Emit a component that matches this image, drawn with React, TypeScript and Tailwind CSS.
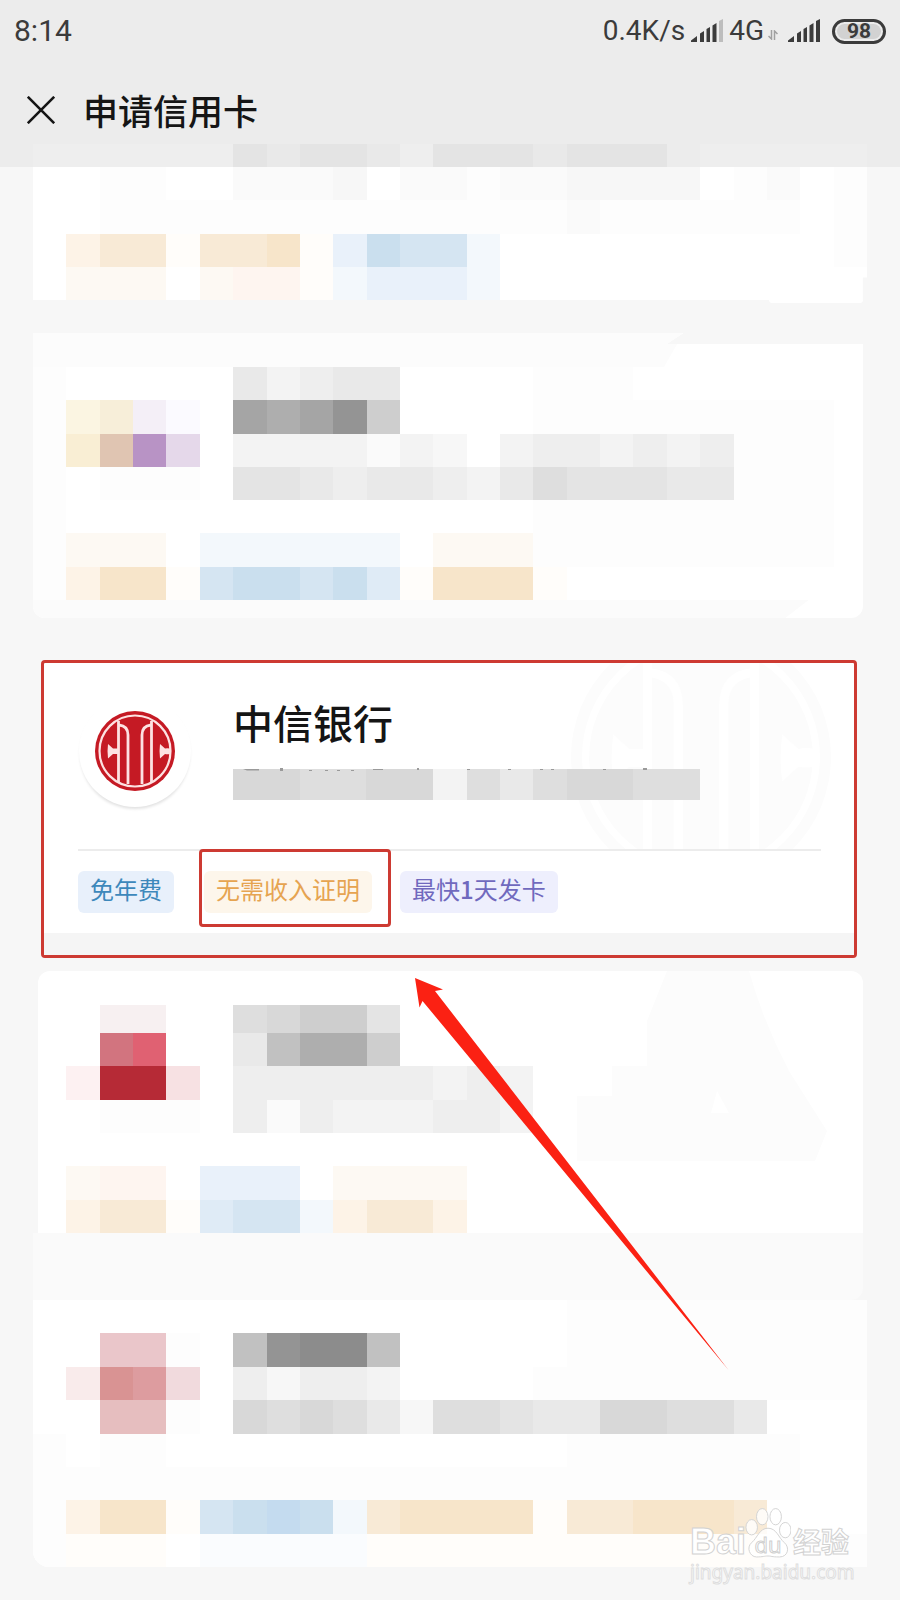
import React from "react";

const TONES: Record<string, string> = {
  ".": "",
  a: "bg-[#fdfdfd]",
  b: "bg-[#fafafa]",
  c: "bg-[#f7f7f7]",
  d: "bg-[#f3f3f3]",
  e: "bg-[#eeeeee]",
  f: "bg-[#e9e9e9]",
  g: "bg-[#e4e4e4]",
  h: "bg-[#dedede]",
  i: "bg-[#d8d8d8]",
  j: "bg-[#cecece]",
  k: "bg-[#c1c1c1]",
  l: "bg-[#aeaeae]",
  m: "bg-[#a5a5a5]",
  n: "bg-[#949494]",
  o: "bg-[#8c8c8c]",
  y: "bg-[#fffdfa]",
  z: "bg-[#fafcfe]",
  p: "bg-[#fef5f0]",
  "1": "bg-[#fdf9f3]",
  "2": "bg-[#fdf3e7]",
  "3": "bg-[#f8ead6]",
  "4": "bg-[#f7e5ca]",
  "5": "bg-[#f3f8fc]",
  "6": "bg-[#e9f1fa]",
  "7": "bg-[#d5e5f2]",
  "8": "bg-[#cadfee]",
  "9": "bg-[#dfebf6]",
  A: "bg-[#fbf5e2]",
  B: "bg-[#f7eed9]",
  C: "bg-[#f4eff7]",
  D: "bg-[#fbfaff]",
  E: "bg-[#f9eed4]",
  F: "bg-[#e0c5b2]",
  G: "bg-[#b893c5]",
  H: "bg-[#e5d8ea]",
  P: "bg-[#f7f0f1]",
  R: "bg-[#d2747f]",
  S: "bg-[#e06172]",
  T: "bg-[#b62a36]",
  U: "bg-[#fdf1f2]",
  V: "bg-[#f7e1e3]",
  W: "bg-[#eac6ca]",
  X: "bg-[#f9ebeb]",
  Y: "bg-[#d99393]",
  Z: "bg-[#dd9c9f]",
  J: "bg-[#f1dadd]",
  K: "bg-[#e6bebf]",
  L: "bg-[#c4dbef]",
};

function Mosaic({ rows, className }: { rows: string[]; className: string }) {
  return (
    <div aria-hidden="true" className={`flex flex-col ${className}`}>
      {rows.map((row, r) => (
        <div key={r} className="flex flex-1">
          {row.split("").map((tone, i) => (
            <div key={i} className={`flex-1 ${TONES[tone]}`} />
          ))}
        </div>
      ))}
    </div>
  );
}

function Signal({ weak = false }: { weak?: boolean }) {
  return (
    <svg width="32" height="24" viewBox="0 0 32 24" fill="#3b3b3b" aria-hidden="true">
      <path d="M0 23v-1.500l6-4.500v6z" />
      <path d="M9 23v-8.500l4-2.500v11z" />
      <path d="M15.500 23v-13l3.500-2v15z" />
      <path d="M21.500 23v-16.500l4-2.500v19z" />
      <path d="M28 23v-21l4-2v23z" fill={weak ? "#bdbdbd" : "#3b3b3b"} />
    </svg>
  );
}

function BankEmblem({ size, ink, line }: { size: string; ink: string; line: string }) {
  return (
    <svg viewBox="0 0 80 80" className={size} aria-hidden="true">
      <circle cx="40" cy="40" r="40" fill={ink} />
      <circle cx="40" cy="40" r="35.500" fill="none" stroke={line} strokeWidth="2.200" />
      <g fill="none" stroke={line} strokeWidth="2.800">
        <path d="M23.500 10v61" />
        <path d="M56.500 10v61" />
        <path d="M24 14q9 1 9 10v49" />
        <path d="M56 14q-9 1-9 10v49" />
      </g>
      <path d="M13 33l5 4.500h5v5.500h-5l-5 4.500q-1-7 0-14.500z" fill={line} />
      <path d="M65 33l5 4.500q2-.5 5 0v5.500q-3 .5-5 0l-5 4.500q-1-7 0-14.500z" fill={line} />
    </svg>
  );
}

const CARD_ONE = [
  "..aa..bbbc.bbabbcccc.ab.a",
  "..aaaaaaaaaaaaaabaaaaaa.a",
  ".233y334y68775..........a",
  ".111.1ppy56665...........",
];

const CARD_TWO = [
  "a.....fdeff....aaa.......",
  "aABCD.mlmnj....aaaaaaaaa.",
  "aEFGH.ddddbdc.deededeaaa.",
  "a.aaa.ggfeffedfhgggffaaa.",
  "a..............aaaaaaaaa.",
  "a111.555555.111aaaaaaaaa.",
  "a244y788789y444y.........",
];

const CARD_THREE = [
  "..RS..fkllj..............",
  ".UTTV.eeeeeeded..........",
  "..aaa.ebedddeed..........",
  ".........................",
  ".1pp.666.1111............",
  ".233y97752332............",
];

const CARD_FOUR = [
  "................aaaaaaaaa",
  "..WWa.knook.....aaaaaaaaa",
  ".XYZJ.eceed....aaaaaaaaaa",
  "..KKa.ihihfchhgffiihhf...",
  "a.aa............aaaaaaa..",
  "aaaaaaaaaaaaaaaaaaaaaaa..",
  "a244y78L8534444y334443...",
  "ayyy.zzzzzyyyyyyyyyyyyaaa",
];

export default function App() {
  return (
    <div className="relative min-h-screen overflow-hidden bg-[#f7f7f7] font-['Noto_Sans_CJK_SC','Noto_Sans',sans-serif]">
      <header className="bg-[#ececec]">
        <div className="flex h-[62px] items-center justify-between px-[14px] font-[Roboto,sans-serif] text-[#3b3b3b]">
          <span className="text-[30px] leading-8">8:14</span>
          <div className="flex items-center text-[28px] leading-8">
            <span className="mr-[6px]">0.4K/s</span>
            <Signal weak />
            <span className="ml-[6px]">4G</span>
            <svg width="10" height="10" viewBox="0 0 10 10" className="mt-2 mr-[10px] ml-1" fill="none" stroke="#a0a0a0" strokeWidth="1.500" aria-hidden="true">
              <path d="M3.500 0v9L.5 6M6.500 10V1l3 3" />
            </svg>
            <Signal />
            <span className="ml-3 flex h-[25px] w-[54px] items-center justify-center rounded-full border-[3px] border-[#3b3b3b] p-[2px]">
              <span className="flex h-[15px] w-full items-center justify-center rounded-full bg-[#d2d2d2] text-[21px] leading-5 font-bold">98</span>
            </span>
          </div>
        </div>
        <div className="mt-[14px] flex h-[68px] items-center pl-[27px]">
          <button type="button" aria-label="关闭" className="mr-7">
            <svg width="28" height="28" viewBox="0 0 28 28" stroke="#151515" strokeWidth="2.600" aria-hidden="true">
              <path d="M.8.8l26.400 26.400M27.200.8L.8 27.200" />
            </svg>
          </button>
          <h1 className="text-[35px] leading-10 font-medium text-[#151515]">申请信用卡</h1>
        </div>
        <Mosaic rows={["eeeeeegfggfegggfggg.eeeee"]} className="mx-[33px] h-[23px]" />
      </header>

      <main>
        <article className="mx-[33px]">
          <Mosaic rows={CARD_ONE} className="h-[133px] bg-white [clip-path:polygon(0_0,100%_0,100%_83%,99.500%_83%,99.500%_100%,0_100%)]" />
          <div className="mr-1 ml-auto h-[3px] w-[94px] rounded-b-md bg-white" />
        </article>

        <article className="mx-[33px] mt-[30px] overflow-hidden [clip-path:inset(0_4px_0_0_round_0_12px_12px_12px)]">
          <div className="flex h-[34px] bg-white [clip-path:polygon(0_0,78%_0,76%_32%,100%_32%,100%_100%,0_100%)]">
            <div className="w-[78%] bg-[#fcfcfc] [clip-path:polygon(0_0,100%_0,97%_100%,0_100%)]" />
          </div>
          <Mosaic rows={CARD_TWO} className="h-[233px] bg-white" />
          <div className="flex h-[18px] bg-white">
            <div className="w-[93%] bg-[#fbfbfb] [clip-path:polygon(0_0,100%_0,97%_100%,0_100%)]" />
          </div>
        </article>

        <article className="mt-[42px] mr-[43px] ml-[41px] rounded-[4px] border-[3px] border-[#cd3a32] bg-white">
          <div className="relative mr-[33px] ml-[34px] flex h-[188px] border-b-2 border-[#ececec]">
            <div className="absolute top-0 right-[-10px] h-full w-[260px] overflow-hidden">
              <div className="-mt-9">
                <BankEmblem size="size-[260px]" ink="#fcfcfc" line="#ffffff" />
              </div>
            </div>
            <div className="relative mt-8 ml-px flex size-[112px] shrink-0 items-center justify-center rounded-full bg-white shadow-[0_3px_3px_-1px_#e2e2e2]">
              <BankEmblem size="size-20" ink="#c51a24" line="#fde2e2" />
            </div>
            <div className="relative ml-[42px] pt-[35px]">
              <h2 className="text-[40px] leading-[48px] font-medium text-[#151515]">中信银行</h2>
              <Mosaic rows={["iihhiidhfhiihh"]} className="mt-[23px] h-[31px] w-[467px]" />
              <svg viewBox="0 0 467 4" className="absolute top-[104px] left-0 w-[467px]" fill="#9a9a9a" aria-hidden="true">
                <path d="M10 2h16v1.500H14zM47 1h3v3h-3zM76 3h3v1h-3zM92 3h3v1h-3zM104 3h3v1h-3zM118 3h3v1h-3zM140 2h10v1h-10zM184 1h2v2h-2zM234 2h3v1h-3zM275 2h3v1h-3zM307 2h3v1h-3zM318 2h3v1h-3zM370 2h3v1h-3zM410 1h4v2h-4z" />
              </svg>
            </div>
          </div>
          <div className="flex pr-[33px] pl-[34px] py-5 text-[24px] leading-[36px]">
            <span className="rounded-md bg-[#e8f0fb] px-3 pb-[6px] text-[#3d88bb]">免年费</span>
            <span className="relative ml-[30px] rounded-md bg-[#fdf6eb] px-3 pb-[6px] text-[#e6a451]">
              无需收入证明
              <span className="absolute -top-[22px] -right-[19px] -bottom-[14px] -left-[5px] rounded-[4px] border-[3px] border-[#cd3a32]" />
            </span>
            <span className="ml-7 rounded-md bg-[#eeeffd] px-3 pb-[6px] text-[#7069be]">
              最快<b className="font-medium">1</b>天发卡
            </span>
          </div>
          <div className="h-[22px] bg-[#f5f5f5]" />
        </article>

        <article className="relative mx-[33px] mt-[13px]">
          <div className="mr-1 ml-[5px] rounded-t-xl bg-white">
            <svg viewBox="0 0 250 190" className="absolute top-0 right-10 h-[190px] w-[250px]" fill="#fcfcfc" aria-hidden="true">
              <path fillRule="evenodd" d="M90 0h82q14 50 40 100l38 60-12 30H0v-65h35V95h35V50zM140 120l12 22h-18z" />
            </svg>
            <div className="h-[34px]" />
            <Mosaic rows={["..PP..hijjg.............."]} className="relative -mr-1 -ml-[5px] h-[28px]" />
            <Mosaic rows={CARD_THREE} className="relative -mr-1 -ml-[5px] h-[200px]" />
          </div>
          <div className="mr-1 h-[67px] rounded-br-xl bg-[#fafafa]" />
        </article>

        <article className="mx-[33px] mb-[33px] overflow-hidden rounded-bl-2xl bg-white">
          <Mosaic rows={CARD_FOUR} className="h-[267px]" />
        </article>
      </main>

      <svg viewBox="0 0 314 392" className="absolute top-[978px] left-[415px] w-[314px]" fill="#fb2113" aria-hidden="true">
        <path d="M0 0l28 11.500-8 1.500L313.500 392 7.500 23 4.500 29.500z" />
      </svg>

      <div className="absolute right-[46px] bottom-4 flex w-[164px] flex-col font-['Noto_Sans','Noto_Sans_CJK_SC',sans-serif] text-white">
        <div className="flex h-[56px] items-end">
          <span className="font-['Liberation_Sans',sans-serif] text-[36px] leading-9 font-bold [-webkit-text-stroke:1px_#d2d2d2]">Bai</span>
          <span className="relative -ml-px flex h-[54px] w-[46px] items-end justify-center">
            <svg viewBox="0 0 48 54" className="absolute inset-0 size-full" fill="#ffffff" fillOpacity="0.800" stroke="#d2d2d2" aria-hidden="true">
              <ellipse cx="7" cy="21" rx="6" ry="8" />
              <ellipse cx="18" cy="10" rx="6" ry="8.500" />
              <ellipse cx="32" cy="10" rx="6" ry="8.500" />
              <ellipse cx="42" cy="24" rx="6" ry="8" />
              <path d="M24 22c9 0 11 10 17 15s4 15-5 15-8-1-12-1-5 1-12 1-11-10-5-15 8-15 17-15z" />
            </svg>
            <span className="relative text-[22px] leading-8 [-webkit-text-stroke:1px_#cfcfcf]">du</span>
          </span>
          <span className="ml-[2px] text-[28px] leading-9 font-bold [-webkit-text-stroke:1px_#d2d2d2]">经验</span>
        </div>
        <span className="text-[19px] leading-6 [-webkit-text-stroke:1px_#dedede]">jingyan.baidu.com</span>
      </div>
    </div>
  );
}
